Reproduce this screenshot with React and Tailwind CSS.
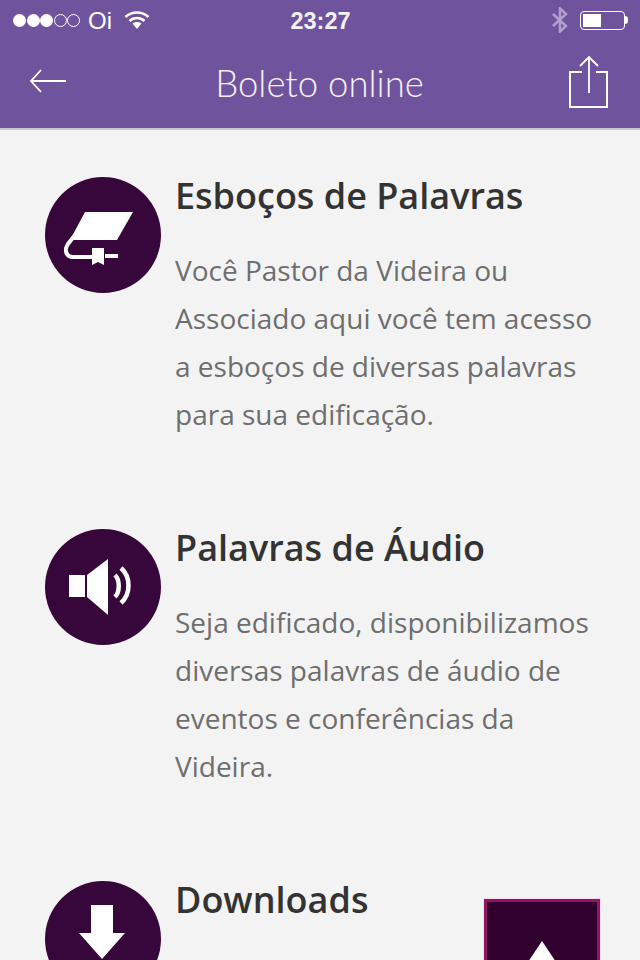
const items = [
  {
    title: 'Esboços de Palavras',
    lines: ['Você Pastor da Videira ou', 'Associado aqui você tem acesso', 'a esboços de diversas palavras', 'para sua edificação.'],
    icon: <BookIcon />,
  },
  {
    title: 'Palavras de Áudio',
    lines: ['Seja edificado, disponibilizamos', 'diversas palavras de áudio de', 'eventos e conferências da', 'Videira.'],
    icon: <SpeakerIcon />,
  },
  {
    title: 'Downloads',
    lines: [],
    icon: <DownloadIcon />,
  },
];

function BookIcon() {
  return (
    <svg width="116" height="116" viewBox="0 0 116 116" fill="none">
      <path d="M40 35 H88 L72 63 H25 Z" fill="#fff" />
      <path d="M30 58 L23 67 C19 73 21 80 28 80 H47" stroke="#fff" strokeWidth="4" />
      <path d="M60 79 H73" stroke="#fff" strokeWidth="4" />
      <path d="M47 71 H59 V88 L53 85 L47 88 Z" fill="#fff" />
    </svg>
  );
}

function SpeakerIcon() {
  return (
    <svg width="116" height="116" viewBox="0 0 116 116" fill="none">
      <path d="M24 46 H40 V68 H24 Z" fill="#fff" />
      <path d="M42 46 L63 30 V86 L42 68 Z" fill="#fff" />
      <path d="M70 46 C75 51 75 63 70 68" stroke="#fff" strokeWidth="4.500" />
      <path d="M76 39 C86 48 86 65 76 74" stroke="#fff" strokeWidth="4.500" />
    </svg>
  );
}

function DownloadIcon() {
  return (
    <svg width="116" height="116" viewBox="0 0 116 116" fill="none">
      <path d="M46 24 H68 V52 H80 L57 78 L34 52 H46 Z" fill="#fff" />
    </svg>
  );
}

export default function App() {
  return (
    <div className="relative h-[960px] w-[640px] overflow-hidden bg-[#f3f3f3] font-['Open_Sans',sans-serif]">
      <header className="h-[130px] border-b-2 border-[#c9c6cc] bg-[#6f539c] text-white">
        <div className="flex h-10 items-center justify-between pl-[13px] pr-[12px]">
          <div className="flex w-[200px] items-center">
            <div className="flex items-center gap-[0.5px]">
              <span className="h-[13px] w-[13px] rounded-full bg-white" />
              <span className="h-[13px] w-[13px] rounded-full bg-white" />
              <span className="h-[13px] w-[13px] rounded-full bg-white" />
              <span className="h-[13px] w-[13px] rounded-full border border-white" />
              <span className="h-[13px] w-[13px] rounded-full border border-white" />
            </div>
            <span className="ml-[8px] mt-[2px] font-['Liberation_Sans',sans-serif] text-[24px] leading-none font-light">Oi</span>
            <svg className="ml-[12px]" width="26" height="20" viewBox="0 0 26 20" fill="none">
              <path d="M1.500 7 C8 1 18 1 24.500 7" stroke="#fff" strokeWidth="2.600" />
              <path d="M5.500 11 C10 7 16 7 20.500 11" stroke="#fff" strokeWidth="2.600" />
              <path d="M8.500 13.500 C11 11.500 15 11.500 17.500 13.500 L13 19 Z" fill="#fff" />
            </svg>
          </div>
          <span className="mt-[3px] font-['Liberation_Sans',sans-serif] text-[23.500px] leading-none font-bold text-[#f4f1f8]">23:27</span>
          <div className="flex w-[200px] items-center justify-end gap-[11px]">
            <svg width="18" height="26" viewBox="0 0 18 26" fill="none">
              <path d="M2 7 L15 19 L9 24.500 V1.500 L15 7 L2 19" stroke="#b2a1cd" strokeWidth="2.500" />
            </svg>
            <div className="flex items-center">
              <div className="h-[19px] w-[45px] rounded-[4px] border border-white p-[2px]">
                <div className="h-full w-[18px] bg-white" />
              </div>
              <span className="h-[8px] w-[3px] rounded-r-sm bg-white" />
            </div>
          </div>
        </div>
        <div className="relative flex h-[88px] items-center justify-between pl-[29px] pr-[31px]">
          <svg width="38" height="26" viewBox="0 0 38 26" fill="none" className="mb-[6px]">
            <path d="M37 13 H2 M12 2 L2 13 L12 24" stroke="#fff" strokeWidth="1.800" />
          </svg>
          <h1 className="mb-[2px] ml-[3px] font-['Lato',sans-serif] text-[36.500px] leading-none font-light text-[#f4f0f8]">Boleto online</h1>
          <svg width="40" height="54" viewBox="0 0 40 54" fill="none" className="mb-[5px]">
            <path d="M13 17 H1 V52 H38 V17 H27" stroke="#fff" strokeWidth="2" />
            <path d="M20 38 V2 M11 11 L20 2 L29 11" stroke="#fff" strokeWidth="1.800" />
          </svg>
        </div>
      </header>

      <main className="flex flex-col gap-[88px] pl-[45px] pr-[30px] pt-[44px]">
        {items.map((item) => (
          <section key={item.title} className="flex gap-[14px]">
            <div className="mt-[3px] h-[116px] w-[116px] shrink-0 rounded-full bg-[#37063a]">{item.icon}</div>
            <div>
              <h2 className="text-[36px] leading-[44px] font-semibold text-[#333333]">{item.title}</h2>
              <div className="mt-[28px] flex flex-col">
                {item.lines.map((line) => (
                  <p key={line} className="text-[28px] leading-[48px] whitespace-nowrap text-[#6e6e6e]">{line}</p>
                ))}
              </div>
            </div>
          </section>
        ))}
      </main>

      <button className="absolute left-[484px] top-[899px] flex h-[116px] w-[116px] justify-center border-[3px] border-[#8e1560] bg-[#32002f] pt-[39px] ring-1 ring-[#fbd9ef]">
        <span className="h-0 w-0 border-x-[16px] border-b-[24px] border-x-transparent border-b-white" />
      </button>
    </div>
  );
}
